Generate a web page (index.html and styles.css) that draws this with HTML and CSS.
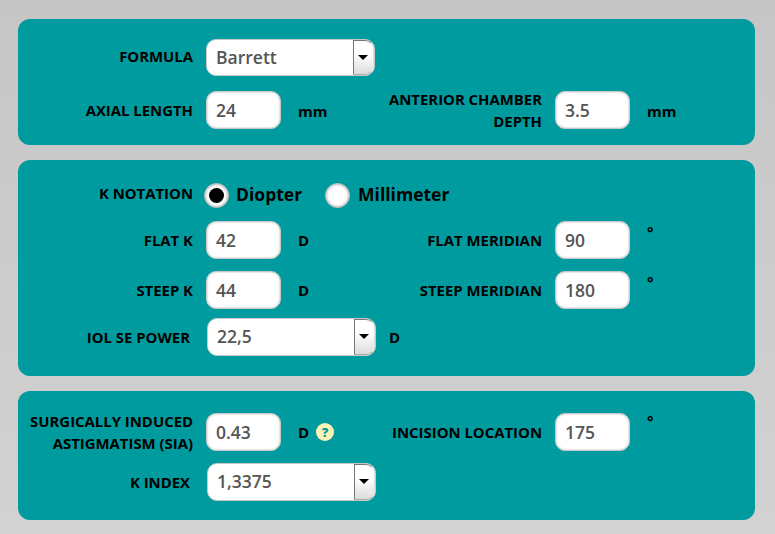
FILE: index.html
```html
<html lang="en">
<head>
	<meta charset="utf-8">
	<title>Toric calculator</title>
	<link rel="stylesheet" href="styles.css">
</head>
<body>
	<div class="panel panel_first">
		<div class="row row_formula">
			<label class="label label_up">FORMULA</label>
			<div class="select_box">
				<select class="select"><option>Barrett</option></select>
				<span class="select_button"></span>
			</div>
		</div>
		<div class="row row_axial">
			<label class="label">AXIAL LENGTH</label>
			<input class="input" value="24">
			<span class="unit unit_mm">mm</span>
			<label class="label">ANTERIOR CHAMBER DEPTH</label>
			<input class="input" value="3.5">
			<span class="unit unit_mm">mm</span>
		</div>
	</div>

	<div class="panel panel_second">
		<div class="row row_notation">
			<label class="label label_up">K NOTATION</label>
			<div class="radio_group">
				<span class="radio radio_checked"></span>
				<span class="radio_text">Diopter</span>
				<span class="radio"></span>
				<span class="radio_text">Millimeter</span>
			</div>
		</div>
		<div class="row row_k">
			<label class="label">FLAT K</label>
			<input class="input" value="42">
			<span class="unit">D</span>
			<label class="label">FLAT MERIDIAN</label>
			<input class="input" value="90">
			<span class="unit unit_degree">°</span>
		</div>
		<div class="row row_k">
			<label class="label">STEEP K</label>
			<input class="input" value="44">
			<span class="unit">D</span>
			<label class="label">STEEP MERIDIAN</label>
			<input class="input" value="180">
			<span class="unit unit_degree">°</span>
		</div>
		<div class="row row_power">
			<label class="label label_shift">IOL SE POWER</label>
			<div class="select_box select_box_shift">
				<select class="select"><option>22,5</option></select>
				<span class="select_button"></span>
			</div>
			<span class="unit unit_power">D</span>
		</div>
	</div>

	<div class="panel panel_third">
		<div class="row row_sia">
			<label class="label">SURGICALLY INDUCED ASTIGMATISM (SIA)</label>
			<input class="input" value="0.43">
			<span class="unit">D <span class="help">?</span></span>
			<label class="label">INCISION LOCATION</label>
			<input class="input" value="175">
			<span class="unit unit_degree">°</span>
		</div>
		<div class="row row_index">
			<label class="label label_shift">K INDEX</label>
			<div class="select_box select_box_shift">
				<select class="select"><option>1,3375</option></select>
				<span class="select_button"></span>
			</div>
		</div>
	</div>
</body>
</html>
```

FILE: styles.css
```css
html, body {
	height: 100%;
}

body {
	margin: 0;
	padding: 19px 20px 0 18px;
	box-sizing: border-box;
	overflow: hidden;
	background: linear-gradient(#c6c6c6, #d2d2d2);
	font-family: "Open Sans", sans-serif;
	color: #000;
}

.panel {
	background-color: #009b9e;
	border-radius: 12px;
	margin-bottom: 15px;
	box-sizing: border-box;
}

.panel_first {
	height: 126px;
	padding-top: 20px;
}

.panel_second {
	height: 216px;
	padding-top: 19px;
}

.panel_third {
	height: 129px;
	padding-top: 22px;
}

.row {
	display: grid;
	grid-template-columns: 175px 75px 70px 165px 75px 40px;
	column-gap: 13px;
	align-items: center;
}

.row_formula {
	height: 37px;
	margin-bottom: 12px;
}

.row_axial {
	height: 38px;
}

.row_notation {
	height: 31px;
	margin-bottom: 11px;
}

.row_k {
	height: 38px;
	margin-bottom: 12px;
}

.row_power {
	height: 38px;
	margin-top: -3px;
}

.row_sia {
	height: 38px;
	margin-top: -3px;
	margin-bottom: 12px;
}

.row_index {
	height: 38px;
	margin-top: 15px;
}

.label {
	font-size: 14.9px;
	font-weight: 700;
	line-height: 22px;
	text-align: right;
}

.label_shift {
	position: relative;
	left: -3px;
}

.label_up {
	margin-top: -3px;
}

.input {
	width: 75px;
	height: 38px;
	box-sizing: border-box;
	padding: 0 9px;
	border: 1px solid #c9c9c9;
	border-radius: 10px;
	background: #fff;
	box-shadow: inset 0 0 2px #aaa;
	font-family: "Open Sans", sans-serif;
	font-size: 17.5px;
	font-weight: 600;
	color: #555;
	outline: none;
}

.unit {
	padding-left: 4px;
	font-size: 15px;
	font-weight: 700;
	white-space: nowrap;
}

.unit_mm {
	padding-top: 2px;
}

.unit_degree {
	align-self: start;
	line-height: 20px;
	padding-top: 1px;
}

.unit_power {
	grid-column: 4;
	padding-left: 12px;
}

.select_box {
	position: relative;
	grid-column: 2 / 4;
	width: 169px;
	height: 37px;
}

.select_box_shift {
	left: 1px;
	height: 38px;
}

.select {
	width: 100%;
	height: 100%;
	box-sizing: border-box;
	padding: 0 9px 2px;
	border: 1px solid #c9c9c9;
	border-radius: 10px;
	background: #fff;
	appearance: none;
	font-family: "Open Sans", sans-serif;
	font-size: 17.5px;
	font-weight: 600;
	color: #555;
	outline: none;
}

.select_button {
	position: absolute;
	top: 1px;
	right: 1px;
	bottom: 1px;
	width: 21px;
	border: 1px solid #777;
	border-right: 1px solid #ddd;
	border-bottom: 1px solid #aaa;
	border-radius: 0 9px 9px 0;
	background: linear-gradient(#fff, #fff 40%, #dcdcdc);
	box-sizing: border-box;
}

.select_button::after {
	content: "";
	position: absolute;
	top: 14px;
	left: 4px;
	border-left: 5px solid transparent;
	border-right: 5px solid transparent;
	border-top: 5px solid #000;
}

.radio_group {
	grid-column: 2 / 7;
	display: flex;
	align-items: center;
	margin-left: -2px;
}

.radio {
	width: 25px;
	height: 25px;
	box-sizing: border-box;
	border: 1px solid #bbb;
	border-radius: 50%;
	background: #fff;
	box-shadow: inset 0 0 3px #888;
	position: relative;
	margin-top: 1px;
}

.radio_checked::after {
	content: "";
	position: absolute;
	top: 4px;
	left: 4px;
	width: 15px;
	height: 15px;
	border-radius: 50%;
	background: #000;
}

.radio_text {
	margin: -2px 23px 0 7px;
	font-size: 17.5px;
	font-weight: 700;
}

.radio_text:last-child {
	margin-left: 8px;
}

.help {
	display: inline-block;
	width: 18px;
	height: 18px;
	margin-left: 3px;
	border-radius: 50%;
	background: #fdf3b4;
	color: #009b9e;
	font-size: 13px;
	font-weight: 800;
	line-height: 18px;
	text-align: center;
	vertical-align: 1px;
}
```
